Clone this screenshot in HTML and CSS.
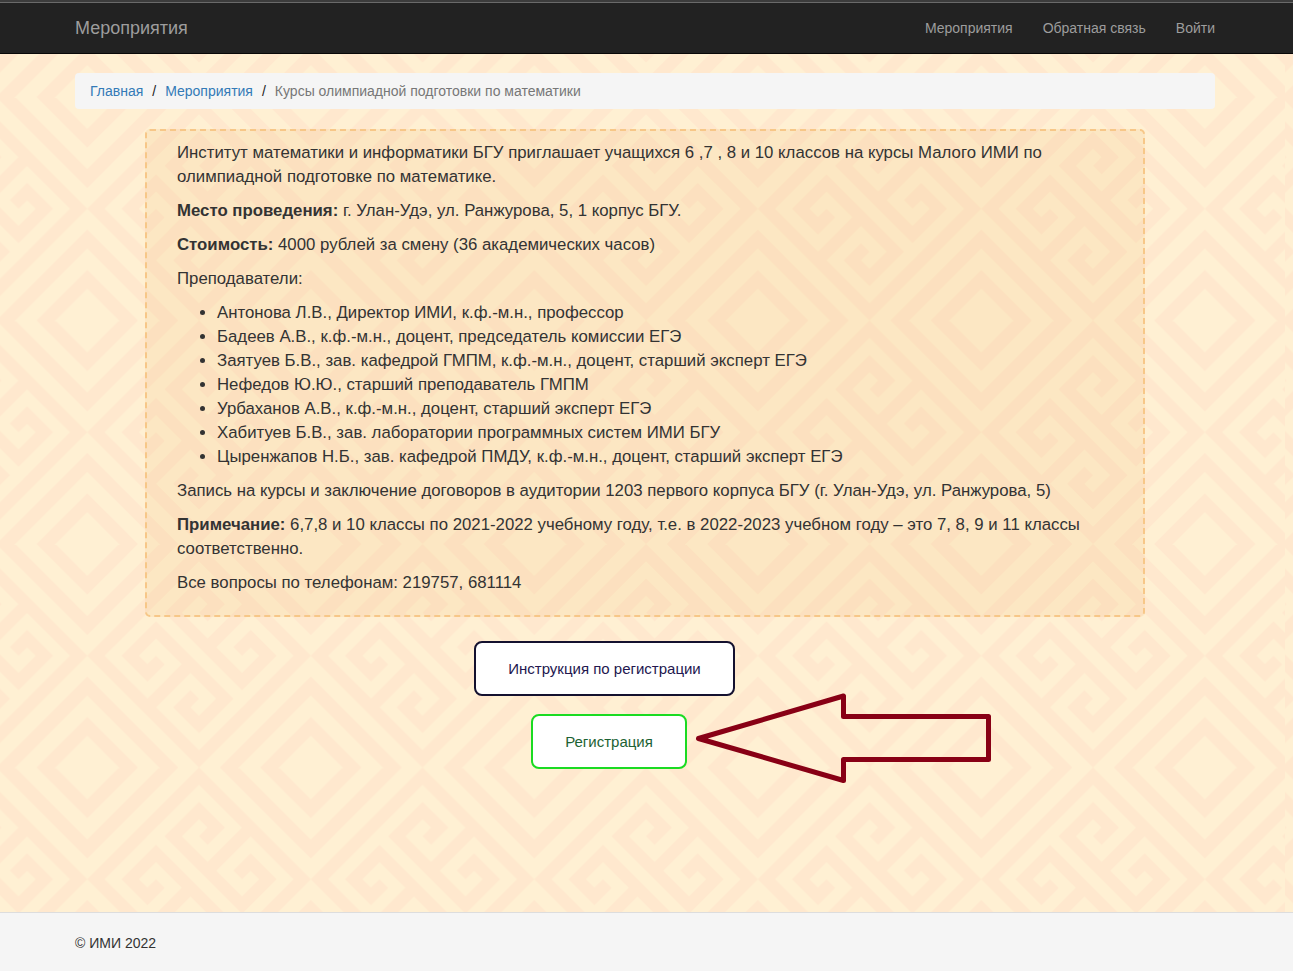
FILE: index.html
```html
<!DOCTYPE html>
<html lang="ru">
<head>
<meta charset="utf-8">
<meta name="viewport" content="width=device-width, initial-scale=1">
<title>Курсы олимпиадной подготовки по математики</title>
<link rel="stylesheet" href="styles.css">
</head>
<body>
<header class="navbar">
  <nav class="container navbar-inner">
    <a class="brand" href="#">Мероприятия</a>
    <ul class="nav-links">
      <li><a href="#">Мероприятия</a></li>
      <li><a href="#">Обратная связь</a></li>
      <li><a href="#">Войти</a></li>
    </ul>
  </nav>
</header>
<main class="container content">
  <ol class="breadcrumb">
    <li><a href="#">Главная</a></li>
    <li><a href="#">Мероприятия</a></li>
    <li class="current">Курсы олимпиадной подготовки по математики</li>
  </ol>
  <section class="event">
    <p>Институт математики и информатики БГУ приглашает учащихся 6 ,7 , 8 и 10 классов на курсы Малого ИМИ по олимпиадной подготовке по математике.</p>
    <p><strong>Место проведения:</strong> г. Улан-Удэ, ул. Ранжурова, 5, 1 корпус БГУ.</p>
    <p><strong>Стоимость:</strong> 4000 рублей за смену (36 академических часов)</p>
    <p>Преподаватели:</p>
    <ul>
      <li>Антонова Л.В., Директор ИМИ, к.ф.-м.н., профессор</li>
      <li>Бадеев А.В., к.ф.-м.н., доцент, председатель комиссии ЕГЭ</li>
      <li>Заятуев Б.В., зав. кафедрой ГМПМ, к.ф.-м.н., доцент, старший эксперт ЕГЭ</li>
      <li>Нефедов Ю.Ю., старший преподаватель ГМПМ</li>
      <li>Урбаханов А.В., к.ф.-м.н., доцент, старший эксперт ЕГЭ</li>
      <li>Хабитуев Б.В., зав. лаборатории программных систем ИМИ БГУ</li>
      <li>Цыренжапов Н.Б., зав. кафедрой ПМДУ, к.ф.-м.н., доцент, старший эксперт ЕГЭ</li>
    </ul>
    <p>Запись на курсы и заключение договоров в аудитории 1203 первого корпуса БГУ (г. Улан-Удэ, ул. Ранжурова, 5)</p>
    <p><strong>Примечание:</strong> 6,7,8 и 10 классы по 2021-2022 учебному году, т.е. в 2022-2023 учебном году – это 7, 8, 9 и 11 классы соответственно.</p>
    <p>Все вопросы по телефонам: 219757, 681114</p>
  </section>
  <div class="actions">
    <button class="btn btn-guide" type="button">Инструкция по регистрации</button>
    <div class="register">
      <button class="btn btn-register" type="button">Регистрация</button>
      <svg class="arrow" width="296" height="90" viewBox="0 0 296 90" aria-hidden="true">
        <path d="M2.5 45.500 147.500 3V23.500H292.500V66.500H147.500V87.500Z"/>
      </svg>
    </div>
  </div>
</main>
<footer class="footer">
  <p class="container">© ИМИ 2022</p>
</footer>
</body>
</html>
```
FILE: styles.css
```css
* { box-sizing: border-box; }

body {
  margin: 0;
  min-height: 100vh;
  display: flex;
  flex-direction: column;
  font: 14px/20px "Liberation Sans", Arial, sans-serif;
  color: #333;
  background: #fff0d3 url("data:image/svg+xml,%3Csvg xmlns='http://www.w3.org/2000/svg' width='1285' height='1788' viewBox='0 0 1285 1788'%3E%3Cdefs%3E%3Cg id='d' fill='none' stroke='%23ffe8ce' stroke-width='1.1'%3E%3Cpath d='M-2.4-2.4H2.4V2.4H-2.4ZM-4.74-4.74H4.74V4.74H-4.74Z'/%3E%3C/g%3E%3Cpattern id='p' patternUnits='userSpaceOnUse' x='87.3' y='97' width='223.5' height='223.5'%3E%3Cg transform='translate(111.75 111.75) matrix(8.596 8.596 8.596 -8.596 0 0)'%3E%3Cpath d='M-6.500-6.500H6.500V6.500H-6.500Z' fill='%23ffe8ce'/%3E%3Cpath d='M-5.500 0H5.500M-5 0V-5H-1V-2H-3V-3.500M5 0V-5H1V-2H3V-3.500M5 0V5H1V2H3V3.500M-5 0V5H-1V2H-3V3.500' fill='none' stroke='%23fff0d3'/%3E%3Cuse href='%23d' x='13'/%3E%3Cuse href='%23d' x='-13'/%3E%3Cuse href='%23d' y='13'/%3E%3Cuse href='%23d' y='-13'/%3E%3C/g%3E%3C/pattern%3E%3C/defs%3E%3Crect width='1285' height='1788' fill='%23fff0d3'/%3E%3Crect width='1285' height='1788' fill='url(%23p)'/%3E%3C/svg%3E") 0 0 repeat;
}

a { color: #337ab7; text-decoration: none; }
p { margin: 0 0 10px; }
ul, ol { margin: 0; padding: 0; }

.container {
  width: 100%;
  max-width: 1173px;
  margin: 0 auto;
  padding: 0 18px 0 15px;
}

.navbar {
  background: #222;
  border-top: 2px solid #3c3c3c;
  border-bottom: 1px solid #080808;
}
.navbar::before {
  content: "";
  display: block;
  height: 1px;
  background: #6a6a6a;
}
.navbar-inner {
  display: flex;
  align-items: center;
  justify-content: space-between;
  min-height: 50px;
}
.navbar a { color: #9d9d9d; }
.brand { font-size: 18px; }
.nav-links {
  display: flex;
  flex-wrap: wrap;
  gap: 0 30px;
  list-style: none;
}

.content { flex: 1; padding-top: 19px; }

.breadcrumb {
  display: flex;
  flex-wrap: wrap;
  padding: 8px 15px;
  margin-bottom: 20px;
  background: #f5f5f5;
  border-radius: 4px;
  list-style: none;
}
.breadcrumb li + li::before {
  content: "/";
  padding: 0 9px;
  color: #222;
}
.breadcrumb .current { color: #777; }

.event {
  max-width: 1000px;
  margin: 0 auto 24px;
  padding: 10px 30px;
  border: 2px dashed #f7c788;
  border-radius: 5px;
  background: rgba(230, 170, 80, .12);
  font-size: 1.2em;
  line-height: 24px;
}
.event ul { margin-bottom: 10px; padding-left: 40px; }

.actions {
  display: flex;
  flex-direction: column;
  align-items: center;
  gap: 18px;
  padding: 0 81px 24px 0;
}
.btn {
  padding: 16px 32px;
  border: 2px solid;
  border-radius: 8px;
  background: #fff;
  font: 15px/19px "Liberation Sans", Arial, sans-serif;
  cursor: pointer;
}
.btn-guide { border-color: #14112f; color: #23174f; }
.btn-register { border-color: #1adb22; color: #1c6233; }
.register { position: relative; margin-left: 9px; }
.arrow {
  position: absolute;
  left: calc(100% + 9px);
  top: -21px;
  fill: none;
  stroke: #880015;
  stroke-width: 5;
  stroke-linejoin: round;
}

.footer {
  padding: 20px 0 18px;
  border-top: 1px solid #ddd;
  background: #f5f5f5;
}
```
